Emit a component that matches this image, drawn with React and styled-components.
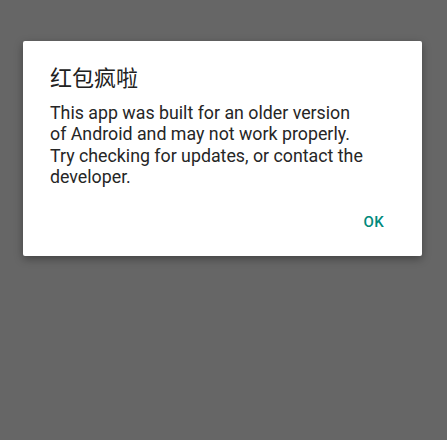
import React from 'react';
import styled, { createGlobalStyle } from 'styled-components';

const GlobalStyle = createGlobalStyle`
  html, body {
    margin: 0;
    padding: 0;
    background: #666666;
  }
  * {
    box-sizing: border-box;
  }
`;

const Screen = styled.div`
  width: 447px;
  height: 440px;
  background: #666666;
  padding: 41px 0 0 23px;
  font-family: Roboto, "Noto Sans CJK SC", sans-serif;
`;

const Dialog = styled.div`
  width: 399px;
  height: 215px;
  background: #ffffff;
  border-radius: 2px;
  box-shadow: 0 3px 8px rgba(0, 0, 0, 0.35);
  display: flex;
  flex-direction: column;
  padding: 22px 24px 0 27px;
`;

const Title = styled.h2`
  margin: 0;
  font-family: "Noto Sans CJK SC", sans-serif;
  font-size: 22px;
  font-weight: 400;
  line-height: 26px;
  color: #212121;
`;

const Message = styled.p`
  margin: 13px 0 0;
  max-width: 318px;
  font-size: 17.8px;
  line-height: 21.3px;
  color: #262626;
`;

const Actions = styled.div`
  display: flex;
  justify-content: flex-end;
  margin-top: auto;
  padding-bottom: 25px;
`;

const ActionButton = styled.button`
  background: none;
  border: none;
  padding: 0 14px 0 0;
  font-family: Roboto, sans-serif;
  font-size: 15px;
  font-weight: 500;
  color: #00897b;
  letter-spacing: 0.3px;
  cursor: pointer;
`;

export default function App() {
  return (
    <>
      <GlobalStyle />
      <Screen>
        <Dialog>
          <Title>红包疯啦</Title>
          <Message>
            This app was built for an older version of Android and may not work properly. Try
            checking for updates, or contact the developer.
          </Message>
          <Actions>
            <ActionButton>OK</ActionButton>
          </Actions>
        </Dialog>
      </Screen>
    </>
  );
}
